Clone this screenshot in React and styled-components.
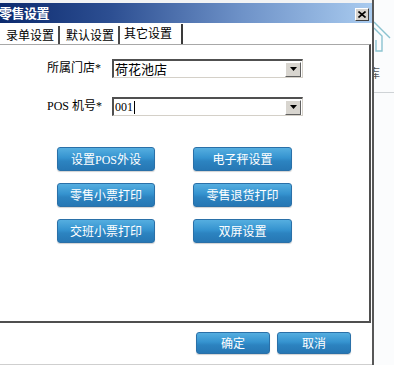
import React from "react";
import styled, { createGlobalStyle } from "styled-components";

const Global = createGlobalStyle`
  html, body { margin: 0; padding: 0; background: #fff; }
  body { font-family: "Noto Sans CJK SC", sans-serif; }
`;

const CJK = `"Noto Sans CJK SC", sans-serif`;
const MIX = `"Liberation Serif", "Noto Sans CJK SC", serif`;

const Page = styled.div`
  width: 394px;
  height: 365px;
  display: flex;
  overflow: hidden;
  background: #fbfcfd;
`;

const Dialog = styled.div`
  width: 372px;
  flex: none;
  display: flex;
  flex-direction: column;
  border-right: 2px solid #575757;
  background: #fff;
`;

const TopGap = styled.div`
  height: 3px;
  background: #f2f3f4;
`;

const TitleBar = styled.div`
  height: 20px;
  display: flex;
  align-items: center;
  justify-content: space-between;
  background: linear-gradient(90deg, #0c2a6e 0%, #2d4f92 30%, #6e92c8 65%, #a9cbef 100%);
  padding-right: 3px;
`;

const Title = styled.span`
  font-family: ${CJK};
  font-weight: bold;
  font-size: 13px;
  line-height: 20px;
  color: #fff;
  margin-left: -1px;
  letter-spacing: -0.5px;
`;

const CloseBtn = styled.div`
  width: 12px;
  height: 11px;
  margin-top: 3px;
  background: #d6d3ce;
  border-top: 1px solid #fff;
  border-left: 1px solid #fff;
  border-right: 1px solid #404040;
  border-bottom: 1px solid #404040;
  display: flex;
  align-items: center;
  justify-content: center;
`;

const TabRow = styled.div`
  height: 21px;
  display: flex;
  align-items: flex-end;
`;

const Tab = styled.div`
  height: ${(p) => (p.$active ? 20 : 18)}px;
  box-sizing: border-box;
  padding: ${(p) => (p.$active ? "0 9px 0 3px" : "0 4px 0 5px")};
  border-left: 1px solid #fff;
  border-right: 2px solid ${(p) => (p.$active ? "#3a3a3a" : "#4a4a4a")};
  font-family: ${CJK};
  font-size: 12px;
  line-height: ${(p) => (p.$active ? 18 : 17)}px;
  color: #000;
  background: #fff;
  white-space: nowrap;
`;

const Panel = styled.div`
  height: 279px;
  box-sizing: border-box;
  margin-right: 1px;
  border-top: 1px solid #a8a8a8;
  border-right: 2px solid #4f4f4f;
  border-bottom: 2px solid #4f4f4f;
  background: #fff;
  padding: 14px 0 0 47px;
  display: flex;
  flex-direction: column;
`;

const FormRow = styled.div`
  display: flex;
  align-items: center;
  height: 19px;
  margin-bottom: 19px;
`;

const Label = styled.div`
  width: 65px;
  font-family: ${MIX};
  font-size: 12px;
  line-height: 19px;
  color: #000;
  white-space: nowrap;
`;

const SelectBox = styled.div`
  width: 191px;
  height: 19px;
  box-sizing: border-box;
  border-top: 2px solid #505050;
  border-left: 2px solid #505050;
  border-bottom: 1px solid #d4d0c8;
  border-right: 1px solid #d4d0c8;
  display: flex;
  align-items: center;
  justify-content: space-between;
  background: #fff;
`;

const Value = styled.span`
  font-family: ${(p) => (p.$latin ? MIX : CJK)};
  font-size: ${(p) => (p.$latin ? 12 : 13)}px;
  line-height: 16px;
  color: #000;
  padding-left: 1px;
  display: flex;
  align-items: center;
`;

const Caret = styled.span`
  display: inline-block;
  width: 1px;
  height: 13px;
  background: #000;
  margin-left: 1px;
`;

const DropBtn = styled.div`
  width: 14px;
  height: 13px;
  margin-right: 1px;
  background: #d8d5cf;
  border-top: 1px solid #fff;
  border-left: 1px solid #fff;
  border-right: 1px solid #606060;
  border-bottom: 1px solid #606060;
  display: flex;
  align-items: center;
  justify-content: center;
`;

const ButtonGrid = styled.div`
  margin-top: 12px;
  margin-left: 10px;
  display: grid;
  grid-template-columns: 98px 99px;
  column-gap: 38px;
  row-gap: 12px;
`;

const BlueButton = styled.div`
  height: ${(p) => p.$h || 24}px;
  width: ${(p) => (p.$w ? p.$w + "px" : "auto")};
  box-sizing: border-box;
  border-radius: 3px;
  border: 1px solid #2a70a8;
  background: linear-gradient(#55aee0 0%, #3593cf 45%, #2c83c0 60%, #2677b4 100%);
  box-shadow: 0 1px 1px rgba(0, 0, 0, 0.18);
  color: #fff;
  font-family: ${MIX};
  font-size: 12px;
  display: flex;
  align-items: center;
  justify-content: center;
  white-space: nowrap;
`;

const Footer = styled.div`
  flex: 1;
  display: flex;
  justify-content: flex-end;
  align-items: flex-start;
  gap: 7px;
  padding: 9px 21px 0 0;
  border-bottom: 1px solid #cfcfcf;
  background: #fff;
`;

const Side = styled.div`
  flex: 1;
  display: flex;
  flex-direction: column;
  overflow: hidden;
  background: #fbfcfd;
`;

const SideIcon = styled.svg`
  display: block;
  margin-top: 20px;
`;

const SideText = styled.div`
  margin-top: 12px;
  margin-left: -6px;
  font-family: ${CJK};
  font-size: 12px;
  line-height: 14px;
  color: #555;
`;

const SideRule = styled.div`
  margin-top: 12px;
  height: 1px;
  background: #cfd3d6;
`;

const Arrow = () => (
  <svg width="7" height="4" viewBox="0 0 7 4">
    <path d="M0 0 H7 L3.5 4 Z" fill="#000" />
  </svg>
);

export default function App() {
  return (
    <Page>
      <Global />
      <Dialog>
        <TopGap />
        <TitleBar>
          <Title>零售设置</Title>
          <CloseBtn>
            <svg width="8" height="7" viewBox="0 0 8 7">
              <path d="M0.5 0.5 L7.5 6.5 M7.5 0.5 L0.5 6.5" stroke="#000" strokeWidth="1.6" />
            </svg>
          </CloseBtn>
        </TitleBar>
        <TabRow>
          <Tab>录单设置</Tab>
          <Tab>默认设置</Tab>
          <Tab $active>其它设置</Tab>
        </TabRow>
        <Panel>
          <FormRow>
            <Label>所属门店*</Label>
            <SelectBox>
              <Value>荷花池店</Value>
              <DropBtn><Arrow /></DropBtn>
            </SelectBox>
          </FormRow>
          <FormRow>
            <Label>POS 机号*</Label>
            <SelectBox>
              <Value $latin>001<Caret /></Value>
              <DropBtn><Arrow /></DropBtn>
            </SelectBox>
          </FormRow>
          <ButtonGrid>
            <BlueButton>设置POS外设</BlueButton>
            <BlueButton>电子秤设置</BlueButton>
            <BlueButton>零售小票打印</BlueButton>
            <BlueButton>零售退货打印</BlueButton>
            <BlueButton>交班小票打印</BlueButton>
            <BlueButton>双屏设置</BlueButton>
          </ButtonGrid>
        </Panel>
        <Footer>
          <BlueButton $w={74} $h={22}>确定</BlueButton>
          <BlueButton $w={74} $h={22}>取消</BlueButton>
        </Footer>
      </Dialog>
      <Side>
        <SideIcon width="20" height="34" viewBox="0 0 20 34">
          <path
            d="M0 2 L16 18 M0 8 L8 16 L8 31 L2 31 L2 20"
            stroke="#8cc3d0"
            strokeWidth="1.4"
            fill="none"
          />
        </SideIcon>
        <SideText>库</SideText>
        <SideRule />
      </Side>
    </Page>
  );
}
